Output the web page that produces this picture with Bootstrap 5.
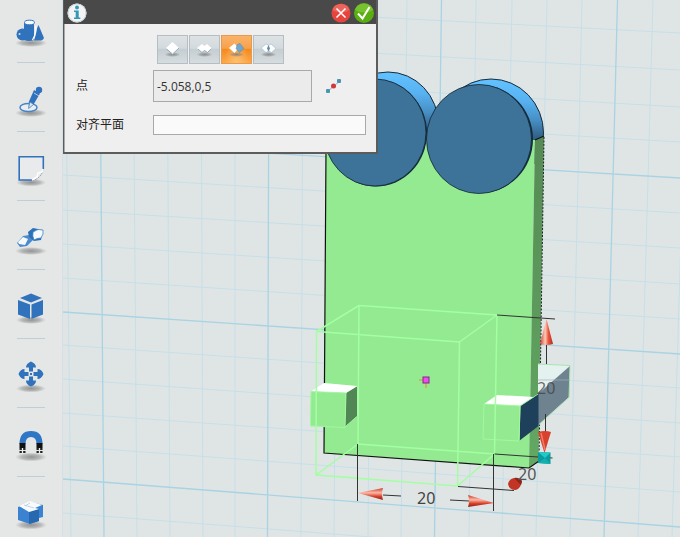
<!DOCTYPE html>
<html lang="zh">
<head>
<meta charset="utf-8">
<meta name="viewport" content="width=device-width, initial-scale=1">
<title>对齐</title>
<link href="https://cdn.jsdelivr.net/npm/bootstrap@5.3.0/dist/css/bootstrap.min.css" rel="stylesheet">
<style>
body{font-family:"Open Sans","Noto Sans CJK SC",sans-serif;font-size:12px;background:#dfe5e5}
.toolbar3d{width:63px;background:#e5e6e6;border-right:1px solid #d2e1e4}
.tool-cell{height:69px}
.tool-cell:first-child{height:62px}
.tool-cell + .tool-cell::before{content:"";position:absolute;top:0;left:17px;right:17px;border-top:1px solid #bfd0d5}
.tool-cell svg{width:44px;height:44px}
.scene{background:#dfe5e5}
.dialog3d{width:315px;background:#efefef;border:solid #5c5c5c;border-width:0 2px 2px 1px;box-shadow:inset 1px 0 #aaa}
.dialog-head{background:#494949;height:24px;padding:0 1px 0 3px}
.head-btn{width:22px;height:22px}
.dialog-form{padding:11px 10px 17px 12px}
.mode-btn{width:31px;height:29px;border:1px solid #b4bec3;background:linear-gradient(#dde2e4,#d3dadd 45%,#c5ced2 50%,#d6dcdf)}
.mode-btn.active{border-color:#e59a4c;background:radial-gradient(ellipse at 50% 100%,#ffc070,transparent 60%),linear-gradient(#f9b36b,#f8a14a 45%,#f48a1d 50%,#fba94a)}
.form-label3d{width:77px;color:#222}
.field3d{border:1px solid #a9a9a9;color:#333;outline:0}
.field-point{height:32px;width:159px;background:#ebebeb;padding:0 3px}
.field-plane{height:20px;background:#fafafa;padding:0 3px}
.modes{margin-left:81px;margin-bottom:6px;gap:1px}
.point-row{margin-bottom:13px}
</style>
<script src="https://cdn.jsdelivr.net/npm/bootstrap@5.3.0/dist/js/bootstrap.bundle.min.js"></script>
</head>
<body>
<svg width="0" height="0" class="position-absolute" aria-hidden="true">
<defs>
<radialGradient id="sh"><stop offset="0" stop-color="#777" stop-opacity=".75"/><stop offset=".6" stop-color="#888" stop-opacity=".5"/><stop offset="1" stop-color="#999" stop-opacity="0"/></radialGradient>
<linearGradient id="cone" x1="0" x2="1"><stop offset="0" stop-color="#c93a28"/><stop offset=".4" stop-color="#ffc9b8"/><stop offset=".65" stop-color="#e8543e"/><stop offset="1" stop-color="#b02c1c"/></linearGradient>
<linearGradient id="coneh" x2="0" y2="1"><stop offset="0" stop-color="#c93a28"/><stop offset=".4" stop-color="#ffb7a5"/><stop offset=".7" stop-color="#d8422e"/><stop offset="1" stop-color="#8c2014"/></linearGradient>
<linearGradient id="rim" x2="0" y2="1"><stop offset="0" stop-color="#62c2ff"/><stop offset=".2" stop-color="#58b2f2"/><stop offset=".38" stop-color="#478fc4"/><stop offset=".6" stop-color="#28506f"/></linearGradient>
<linearGradient id="side" x2="0" y2="1"><stop offset="0" stop-color="#568a55"/><stop offset="1" stop-color="#62a862"/></linearGradient>
</defs>
</svg>
<div class="d-flex vh-100 overflow-hidden">
<nav class="toolbar3d flex-shrink-0 overflow-hidden" aria-label="工具">
<button type="button" class="tool-cell btn p-0 w-100 border-0 rounded-0 d-flex align-items-center justify-content-center position-relative" aria-label="基本实体"><svg viewBox="10 9 44 44"><ellipse cx="32" cy="43" rx="16" ry="4" fill="url(#sh)"/><circle cx="23.500" cy="34.500" r="6" fill="#3172bd"/><circle cx="20.500" cy="34" r="1" fill="#cfe2f5"/><path d="M25 23v17q5 2 10 0V23z" fill="#3172bd"/><ellipse cx="30.500" cy="22.500" rx="5" ry="2.300" fill="#f7fafc" stroke="#3172bd"/><path d="M39.500 25l5.500 13q-1 3-6 2.500h-4q2-4 1.500-9z" fill="#3172bd"/><path d="M36.500 26q2 5-3 14" stroke="#fff" fill="none" stroke-width="1.300"/></svg></button>
<button type="button" class="tool-cell btn p-0 w-100 border-0 rounded-0 d-flex align-items-center justify-content-center position-relative" aria-label="草图绘制"><svg viewBox="10 74 44 44"><ellipse cx="32" cy="112" rx="16" ry="4" fill="url(#sh)"/><ellipse cx="29.500" cy="106.500" rx="8.500" ry="4" fill="#e9eef2" stroke="#4684c5" stroke-width="1.500"/><path d="M35 89l6 3.500-6.500 11-4.500 4-.500-1 .500-6z" fill="#3172bd"/><path d="M35 92l5 3" stroke="#c9dff2" stroke-width=".8"/><circle cx="40" cy="89" r="3.200" fill="#3172bd"/><path d="M31 101l3.500 2.500-5 4z" fill="#dce7ef" stroke="#5285b5" stroke-width=".6"/></svg></button>
<button type="button" class="tool-cell btn p-0 w-100 border-0 rounded-0 d-flex align-items-center justify-content-center position-relative" aria-label="草图编辑"><svg viewBox="10 143 44 44"><ellipse cx="32" cy="181.500" rx="15" ry="4" fill="url(#sh)"/><path d="M44.300 168v-12.200H20.200V179H33q10-2 11-11z" fill="#e8eaeb"/><path d="M44.300 168v-12.200H20.200V179H33" fill="none" stroke="#3172bd" stroke-width="1.600"/><path d="M44 168q-1 9-11 11.500" fill="none" stroke="#8296a7" stroke-dasharray="2 1"/><path d="M44 168l-1 3-4 1-1 4-5 3" stroke="#fff" fill="none" stroke-width="1.500"/></svg></button>
<button type="button" class="tool-cell btn p-0 w-100 border-0 rounded-0 d-flex align-items-center justify-content-center position-relative" aria-label="特征造型"><svg viewBox="10 212 44 44"><ellipse cx="32" cy="250" rx="16" ry="4" fill="url(#sh)"/><path d="M18 242l6-7 6-1 5 4-7 7-7 1z" fill="#4b8dcc"/><path d="M19 241l5-5 5 2-3 6-6-1z" fill="#f5f9fc"/><path d="M29 231l5-4 10 2-2 10-7 1-5-4z" fill="#2c70b9"/><path d="M34 231q5-4 10-2 1 4-2 8-4 0-7 2-2-4-1-8z" fill="#f4f9fd" stroke="#3172bd" stroke-width=".7"/></svg></button>
<button type="button" class="tool-cell btn p-0 w-100 border-0 rounded-0 d-flex align-items-center justify-content-center position-relative" aria-label="特殊功能"><svg viewBox="10 281 44 44"><ellipse cx="32" cy="319" rx="15" ry="4" fill="url(#sh)"/><path d="M32 292.500l11 4.500-11 4.500-11-4.500zM19 299l12 4.500V318l-12-4.500zM44 299l-11.500 4.500V318l11.500-4.500z" fill="#3172bd"/></svg></button>
<button type="button" class="tool-cell btn p-0 w-100 border-0 rounded-0 d-flex align-items-center justify-content-center position-relative" aria-label="基本编辑"><svg viewBox="10 350 44 44"><ellipse cx="32" cy="387.500" rx="15" ry="4" fill="url(#sh)"/><g fill="#3172bd"><path id="ar" d="M32 360.500q5 2 5 6h-3v4h-4v-4h-3q0-4 5-6z"/><use href="#ar" transform="rotate(90 32 373)"/><use href="#ar" transform="rotate(180 32 373)"/><use href="#ar" transform="rotate(270 32 373)"/><rect x="31" y="372" width="2" height="2"/></g></svg></button>
<button type="button" class="tool-cell btn p-0 w-100 border-0 rounded-0 d-flex align-items-center justify-content-center position-relative" aria-label="自动吸附"><svg viewBox="10 419 44 44"><ellipse cx="32" cy="456" rx="16" ry="4.500" fill="url(#sh)"/><path d="M23.500 443q0-10 8.500-10t8.500 10" fill="none" stroke="#2e77c7" stroke-width="6"/><path d="M20.500 442h6v5h-6zM37.500 442h6v5h-6z" fill="#111"/><path d="M23.500 447v6M40.500 447v6" stroke="#222" stroke-width="6" stroke-dasharray="2 1"/><path d="M23.500 447v6M40.500 447v6" stroke="#eee" stroke-width="1.300"/></svg></button>
<button type="button" class="tool-cell btn p-0 w-100 border-0 rounded-0 d-flex align-items-center justify-content-center position-relative" aria-label="组合编辑"><svg viewBox="10 488 44 44"><ellipse cx="32" cy="524" rx="16" ry="4.500" fill="url(#sh)"/><path d="M19 506l13-5 12 3v12l-4 1v3l-9 3-12-4z" fill="#3b83d0"/><path d="M30 511l10-3v12l-10 3z" fill="#2868b0"/><path d="M20 505l11-5 12 4-7 3 4 1-10 3z" fill="#f8fbfd"/><path d="M25 504l10 3M31 502l-5 3" stroke="#b6c9dc" stroke-width=".8"/></svg></button>
</nav>
<main class="scene flex-grow-1 position-relative overflow-hidden">
<svg class="d-block w-100 h-100" viewBox="63 0 617 537" preserveAspectRatio="xMinYMin slice" role="img" aria-label="三维模型">
<g fill="none" stroke="#c6dfe8" stroke-width="1">
<path d="M65 0l6 537M133 0l4 537M167 0l3 537M201 0l2 537M235 0v537M303 0l-2 537M338 0l-4 537M372 0l-4 537M407 0l-6 537M476 0l-7 537M512 0l-10 537M547 0l-11 537M582 0l-12 537M653 0l-15 537M688 0l-16 537"/>
<path d="M63 1l617 32M63 36l617 34M63 71l617 36M63 106l617 36M63 175l617 38M63 210l617 38M63 244l617 40M63 278l617 41M63 345l617 43M63 379l617 44M63 413l617 44M63 446l617 46M63 513l617 48"/>
</g>
<path d="M99.500 0l4.500 537M269 0l-1.500 537M441.500 0l-7 537M617.500 0l-13.500 537M63 141l617 37M63 312l617 42M63 479l617 48" fill="none" stroke="#a9d3e2" stroke-width="1.300"/>
<g stroke="#182b3a" stroke-width="1">
<ellipse cx="388" cy="125" rx="50.500" ry="53" fill="url(#rim)"/>
<ellipse cx="491" cy="133" rx="52.500" ry="54" fill="url(#rim)"/>
</g>
<path d="M326 140H535L529 468 324 453z" fill="#93ea91"/>
<path d="M535 140l9-4-5.500 325-9.500 7z" fill="url(#side)"/>
<path d="M326 150l-2 303 205 15 10-7M535 140l9-4" fill="none" stroke="#111" stroke-width="1.200"/>
<path d="M544 137l-5 324" stroke="#222" stroke-dasharray="2 1.500"/>
<ellipse cx="376" cy="133" rx="51" ry="53.500" fill="#142b3d"/>
<ellipse cx="480.500" cy="139" rx="52.500" ry="54" fill="#142b3d"/>
<g stroke="#142431" stroke-width=".8" fill="#3d7398"><ellipse cx="375" cy="132.500" rx="51" ry="53.500"/><ellipse cx="479" cy="139" rx="52.500" ry="54.500"/></g>
<!-- side arms -->
<path d="M538 364l32 1.500-32 28z" fill="#e3f2ef"/>
<path d="M570 366l-1 31-31 28v-31z" fill="#6e8290"/>
<path d="M538 364l32 1.500v1l-1 31-31 28" fill="none" stroke="#a8e5b0"/>
<path d="M538 380h32" stroke="#9db3be" stroke-width=".7"/>
<path d="M520 406l18.500-13v33L519 441z" fill="#1f405a"/>
<path d="M484 404l13-9 37 2-14 9z" fill="#fff"/>
<path d="M484 404l36 2-1 35-36-2z" fill="#93ea91" stroke="#a2f8a0"/>
<path d="M519 441l1-35 18-12" fill="none" stroke="#9ff79d"/>
<path d="M346 393l11.500-7v30L345 427z" fill="#518655"/>
<path d="M311 391.500l13-8.500 33.500 3-11.500 7z" fill="#fff"/>
<path d="M311 391.500l35 1.500-1 34.500-34.500-1.500z" fill="#93ea91" stroke="#a2f8a0"/>
<path d="M345 427l12.500-11v-30" fill="none" stroke="#a2f8a0"/>
<!-- bounding box -->
<path d="M316.500 331.500L459.500 342 457.500 486 316 475zM359 305.500L497 315 494.500 454 358 444zM316.500 331.500L359 305.500M459.500 342L497 315M457.500 486l37-32M316 475l42-31" fill="none" stroke="#a3ffa1" stroke-width="1.500"/>
<!-- dimensions -->
<g stroke="#333" stroke-width="1" fill="none"><path d="M497 315l58 4M546.500 344v20M545.500 414v19M494.500 454l58 4M458 486.500l56 4M357.500 444v57M493.500 454v57M383 495l18 1M450 500l19 1"/></g>
<path d="M546.500 319l6.500 25q-6.500 2-13 0z" fill="url(#cone)"/>
<path d="M538 432q7-2 13 0l-6.500 21z" fill="#d8412e"/><path d="M541 433l4 17" stroke="#f47b65" stroke-width="1.500"/>
<path d="M358 493l25-5q-2 6 0 12z" fill="url(#coneh)"/>
<path d="M494 503l-26-8q2 6 0 12z" fill="url(#coneh)"/>
<path d="M508 484q1-5 6-6l8 3q-1 7-6 9-7 0-8-6z" fill="#c23525"/><path d="M514 478q5-1 8 3l-1 4z" fill="#8c2418"/>
<path d="M538 452l12.500.500V464L538 463z" fill="#0c9a9c"/><path d="M538 452l7 6 5.500-5.500z" fill="#22c9c9"/><path d="M538 463l7-5 5.500 6z" fill="#12b0b0"/>
<path d="M419 380h8M426 381v7" stroke="#dba546" stroke-width="1.500"/><rect x="423" y="377" width="6" height="6" fill="#f34af0" stroke="#7c2a86"/>
<g font-family="Noto Sans,sans-serif" font-size="16" fill="#444"><text x="417" y="504">20</text><text x="518" y="480" fill="#555">20</text><text x="537" y="394" fill="#444" fill-opacity=".8">20</text></g>
</svg>
<section class="dialog3d position-absolute top-0 start-0" aria-label="对齐">
<header class="dialog-head d-flex align-items-center">
<svg class="head-btn me-auto" viewBox="0 0 22 22" role="img" aria-label="信息"><circle cx="10" cy="12" r="9.500" fill="#f2f4f5"/><circle cx="10" cy="12" r="9" fill="none" stroke="#cdd5d8"/><circle cx="10" cy="6.500" r="1.900" fill="#3298b4"/><path d="M7 9.500h4.700v7h1.600V18H7v-1.500h1.700V11H7z" fill="#3298b4"/></svg>
<button type="button" class="head-btn btn p-0 border-0 d-flex" aria-label="取消"><svg viewBox="0 0 22 22"><circle cx="10" cy="12" r="9.500" fill="#e6453d"/><path d="M1.500 9Q3 3 10 3t8.500 6Q10 14 1.500 9z" fill="#f0796f" opacity=".6"/><path d="M5.500 7.500l9 9m0-9l-9 9" stroke="#fff" stroke-width="1.500"/></svg></button>
<button type="button" class="head-btn btn p-0 border-0 d-flex" aria-label="确定"><svg viewBox="0 0 22 22"><circle cx="11" cy="12" r="10" fill="#5bae12"/><path d="M2 9Q4 2.500 11 2.500T20 9Q11 14 2 9z" fill="#8ace43" opacity=".6"/><path d="M5 12.500l4.500 5L16.500 6" fill="none" stroke="#fff" stroke-width="2"/></svg></button>
</header>
<form class="dialog-form">
<div class="modes d-flex" role="group" aria-label="模式">
<button type="button" class="mode-btn btn rounded-0 p-0 d-flex" aria-label="模式一"><svg viewBox="0 0 29 27"><ellipse cx="14.500" cy="18.500" rx="8" ry="2.500" fill="url(#sh)"/><path d="M14.500 6l6.500 6-6.500 6.500-6.500-6.500z" fill="#fff"/><path d="M8.500 13l6 5 6.500-6" fill="none" stroke="#7d9cb4" stroke-width=".8"/></svg></button>
<button type="button" class="mode-btn btn rounded-0 p-0 d-flex" aria-label="模式二"><svg viewBox="0 0 29 27"><ellipse cx="14.500" cy="18.500" rx="8" ry="2.500" fill="url(#sh)"/><path d="M12 8l2.500 2L17 8l5 4.500-4.500 4-3-2-2.500 2-5-4.500z" fill="#fff"/><path d="M8 13l4 3.500 2.500-2 3 2 4-4" fill="none" stroke="#7d9cb4" stroke-width=".8"/></svg></button>
<button type="button" class="mode-btn active btn rounded-0 p-0 d-flex" aria-label="模式三" aria-pressed="true"><svg viewBox="0 0 29 27"><ellipse cx="14.500" cy="18.500" rx="8" ry="2.500" fill="url(#sh)"/><path d="M12.500 8l3 4.500-3 4-5-4.500z" fill="#fff" stroke="#fff"/><path d="M15.500 8.500l2.500-1 4 5-4.500 4-3.500-4z" fill="#71a7cd" stroke="#4b86b2" stroke-width=".5"/></svg></button>
<button type="button" class="mode-btn btn rounded-0 p-0 d-flex" aria-label="模式四"><svg viewBox="0 0 29 27"><ellipse cx="14.500" cy="18.500" rx="8" ry="2.500" fill="url(#sh)"/><path d="M12 8l2.500 1.500L17 8l5 4.500-4.500 4-3-2-2.500 2-5-4.500z" fill="#fff" stroke="#91a9ba" stroke-width=".5"/><path d="M14.500 9l1.500 3.500-1.500 3-1.500-3z" fill="#5a8eb8"/></svg></button>
</div>
<div class="point-row d-flex align-items-center">
<label class="form-label3d" for="pt">点</label><input id="pt" class="field3d field-point" value="-5.058,0,5">
<button type="button" class="btn p-0 border-0 ms-2 ps-1 d-flex" aria-label="选点"><svg width="20" height="20" viewBox="0 0 20 20"><path d="M4 15L16 5" stroke="#aab" stroke-width="1"/><rect x="2" y="13" width="4" height="4" rx="1" fill="#4a94b4"/><rect x="13" y="3" width="4" height="4" rx="1" fill="#4a94b4"/><circle cx="9.500" cy="10" r="2.500" fill="#cc3a39"/></svg></button>
</div>
<div class="d-flex align-items-center">
<label class="form-label3d flex-shrink-0" for="pl">对齐平面</label><input id="pl" class="field3d field-plane flex-grow-1">
</div>
</form>
</section>
</main>
</div>
</body>
</html>
